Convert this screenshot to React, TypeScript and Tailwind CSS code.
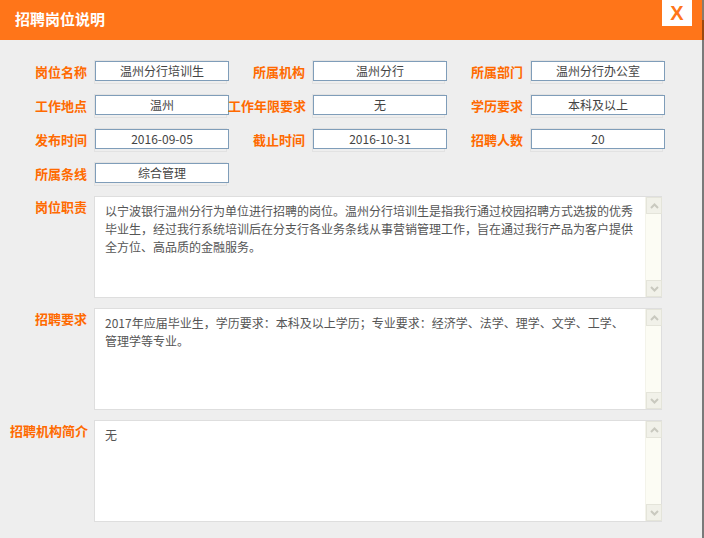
import React from "react";

const FONT = { fontFamily: '"Noto Sans CJK SC", "Noto Sans", sans-serif' };

function Field({ label, value }: { label: string; value: string }) {
  return (
    <div className="flex items-center w-[217px]">
      <div className="w-[77px] text-right text-[13px] font-bold text-[#ff6a00] whitespace-nowrap leading-[24px]">
        {label}
      </div>
      <div className="ml-[7px] w-[133px] h-[24px] border border-[#e2e2e2]">
        <div className="w-[134px] h-[20px] border border-[#7f9db9] bg-white flex items-center justify-center text-[12px] text-[#444] leading-none">
          {value}
        </div>
      </div>
    </div>
  );
}

function Chevron({ up }: { up?: boolean }) {
  return (
    <svg width="9" height="6" viewBox="0 0 9 6">
      <path
        d={up ? "M1 5 L4.5 1.5 L8 5" : "M1 1 L4.5 4.5 L8 1"}
        fill="none"
        stroke="#c9c9bf"
        strokeWidth="2"
      />
    </svg>
  );
}

function Scrollbar() {
  return (
    <div className="w-[16px] h-full bg-[#fcfcf4] flex flex-col justify-between border-l border-[#f3f3ea]">
      <div className="w-[16px] h-[17px] bg-[#f1f1e9] border border-[#e4e4da] flex items-center justify-center">
        <Chevron up />
      </div>
      <div className="w-[16px] h-[17px] bg-[#f1f1e9] border border-[#e4e4da] flex items-center justify-center">
        <Chevron />
      </div>
    </div>
  );
}

function AreaRow({ label, lines }: { label: string; lines: string[] }) {
  return (
    <div className="flex items-start">
      <div className="w-[77px] text-right text-[13px] font-bold text-[#ff6a00] whitespace-nowrap leading-[18px] pt-[2px]">
        {label}
      </div>
      <div className="ml-[7px] w-[568px] h-[102px] border border-[#dedede] bg-white flex">
        <div className="flex-1 pl-[10px] pt-[5px] text-[12px] leading-[18px] text-[#555] whitespace-nowrap">
          {lines.map((l, i) => (
            <div key={i}>{l}</div>
          ))}
        </div>
        <Scrollbar />
      </div>
    </div>
  );
}

export default function App() {
  return (
    <div className="w-[704px] h-[538px] flex overflow-hidden bg-[#eeeeee]" style={FONT}>
      <div className="w-[702px] h-full flex flex-col bg-[#eeeeee]">
        <div className="h-[40px] bg-[#ff7519] flex items-start justify-between">
          <div className="pl-[15px] pt-[9px] text-[15px] font-bold text-white leading-[20px]">招聘岗位说明</div>
          <div className="mr-[10px] w-[30px] h-[26px] bg-white flex items-center justify-center">
            <span
              className="text-[20px] font-bold text-[#ff7519] leading-none"
              style={{ fontFamily: '"Liberation Sans", Arial, sans-serif' }}
            >
              X
            </span>
          </div>
        </div>
        <div className="pt-[20px] pl-[10px] flex flex-col gap-[10px]">
          <div className="flex gap-[1px]">
            <Field label="岗位名称" value="温州分行培训生" />
            <Field label="所属机构" value="温州分行" />
            <Field label="所属部门" value="温州分行办公室" />
          </div>
          <div className="flex gap-[1px]">
            <Field label="工作地点" value="温州" />
            <Field label="工作年限要求" value="无" />
            <Field label="学历要求" value="本科及以上" />
          </div>
          <div className="flex gap-[1px]">
            <Field label="发布时间" value="2016-09-05" />
            <Field label="截止时间" value="2016-10-31" />
            <Field label="招聘人数" value="20" />
          </div>
          <div className="flex gap-[1px]">
            <Field label="所属条线" value="综合管理" />
          </div>
          <AreaRow
            label="岗位职责"
            lines={[
              "以宁波银行温州分行为单位进行招聘的岗位。温州分行培训生是指我行通过校园招聘方式选拔的优秀",
              "毕业生，经过我行系统培训后在分支行各业务条线从事营销管理工作，旨在通过我行产品为客户提供",
              "全方位、高品质的金融服务。",
            ]}
          />
          <AreaRow
            label="招聘要求"
            lines={[
              "2017年应届毕业生，学历要求：本科及以上学历；专业要求：经济学、法学、理学、文学、工学、",
              "管理学等专业。",
            ]}
          />
          <AreaRow label="招聘机构简介" lines={["无"]} />
        </div>
      </div>
      <div className="w-[2px] h-full flex flex-col bg-[#7a7a7a]">
        <div className="h-[20px] bg-[#8a7a6a]" />
        <div className="h-[20px] bg-[#9a4a10]" />
      </div>
    </div>
  );
}
